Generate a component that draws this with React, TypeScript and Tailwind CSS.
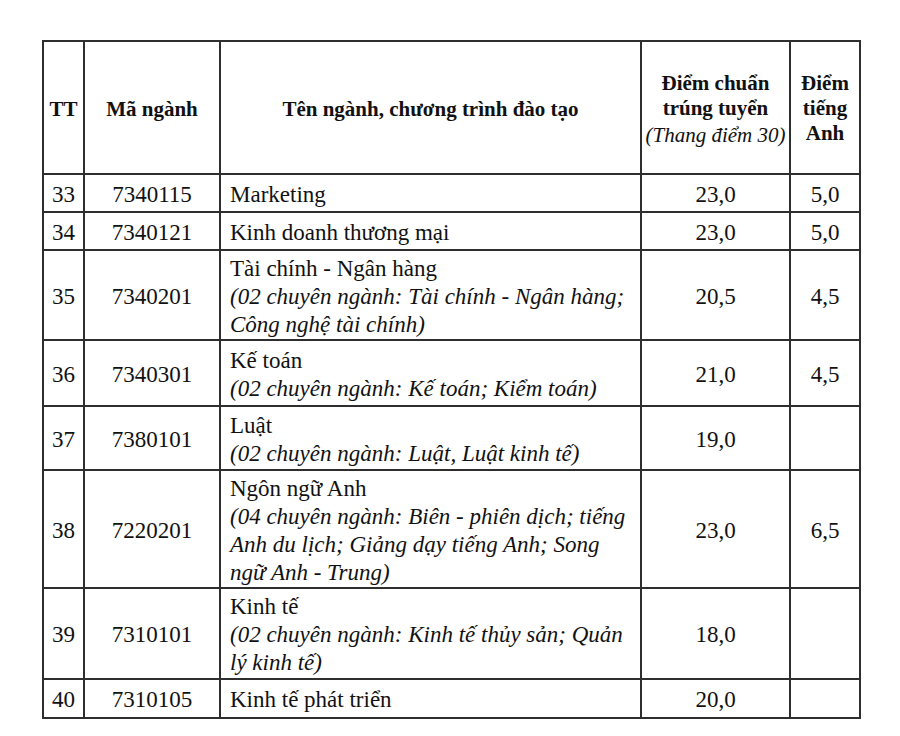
import * as React from "react";

type Row = {
  tt: string;
  ma: string;
  ten: string;
  sub?: string[];
  diem: string;
  anh?: string;
  h: string;
};

const rows: Row[] = [
  { tt: "33", ma: "7340115", ten: "Marketing", diem: "23,0", anh: "5,0", h: "h-[38px]" },
  { tt: "34", ma: "7340121", ten: "Kinh doanh thương mại", diem: "23,0", anh: "5,0", h: "h-[38px]" },
  {
    tt: "35",
    ma: "7340201",
    ten: "Tài chính - Ngân hàng",
    sub: ["(02 chuyên ngành: Tài chính - Ngân hàng;", "Công nghệ tài chính)"],
    diem: "20,5",
    anh: "4,5",
    h: "h-[90px]",
  },
  {
    tt: "36",
    ma: "7340301",
    ten: "Kế toán",
    sub: ["(02 chuyên ngành: Kế toán; Kiểm toán)"],
    diem: "21,0",
    anh: "4,5",
    h: "h-[66px]",
  },
  {
    tt: "37",
    ma: "7380101",
    ten: "Luật",
    sub: ["(02 chuyên ngành: Luật, Luật kinh tế)"],
    diem: "19,0",
    h: "h-[64px]",
  },
  {
    tt: "38",
    ma: "7220201",
    ten: "Ngôn ngữ Anh",
    sub: [
      "(04 chuyên ngành: Biên - phiên dịch; tiếng",
      "Anh du lịch; Giảng dạy tiếng Anh; Song",
      "ngữ Anh - Trung)",
    ],
    diem: "23,0",
    anh: "6,5",
    h: "h-[118px]",
  },
  {
    tt: "39",
    ma: "7310101",
    ten: "Kinh tế",
    sub: ["(02 chuyên ngành: Kinh tế thủy sản; Quản", "lý kinh tế)"],
    diem: "18,0",
    h: "h-[91px]",
  },
  { tt: "40", ma: "7310105", ten: "Kinh tế phát triển", diem: "20,0", h: "h-[39px]" },
];

const cell = "border-2 border-[#2e2e2e] align-middle";

export default function App() {
  return (
    <div className="w-[900px] h-[736px] bg-white pl-[42px] pt-[40px] text-[#111] font-['Liberation_Serif','Times_New_Roman',serif]">
      <table className="table-fixed border-collapse w-[817px]">
        <colgroup>
          <col className="w-[41px]" />
          <col className="w-[136px]" />
          <col className="w-[421px]" />
          <col className="w-[149px]" />
          <col className="w-[70px]" />
        </colgroup>
        <thead>
          <tr className="h-[133px] text-[21px] leading-[25px] font-bold">
            <th className={`${cell} text-center pt-[3px]`}>TT</th>
            <th className={`${cell} text-center pt-[3px]`}>Mã ngành</th>
            <th className={`${cell} text-center pt-[3px]`}>Tên ngành, chương trình đào tạo</th>
            <th className={`${cell} text-center pt-[4px]`}>
              <div>Điểm chuẩn</div>
              <div>trúng tuyển</div>
              <div className="font-normal italic text-[21px] leading-[28px] whitespace-nowrap">
                (Thang điểm 30)
              </div>
            </th>
            <th className={`${cell} text-center pt-[2px]`}>
              <div>Điểm</div>
              <div>tiếng</div>
              <div>Anh</div>
            </th>
          </tr>
        </thead>
        <tbody className="text-[23px] leading-[28px]">
          {rows.map((r) => (
            <tr key={r.tt} className={r.h}>
              <td className={`${cell} text-center pt-[3px]`}>{r.tt}</td>
              <td className={`${cell} text-center pt-[3px]`}>{r.ma}</td>
              <td className={`${cell} pl-[9px] pt-[3px] whitespace-nowrap`}>
                <div>{r.ten}</div>
                {r.sub?.map((s) => (
                  <div key={s} className="italic">
                    {s}
                  </div>
                ))}
              </td>
              <td className={`${cell} text-center pt-[3px]`}>{r.diem}</td>
              <td className={`${cell} text-center pt-[3px]`}>{r.anh ?? ""}</td>
            </tr>
          ))}
        </tbody>
      </table>
    </div>
  );
}
